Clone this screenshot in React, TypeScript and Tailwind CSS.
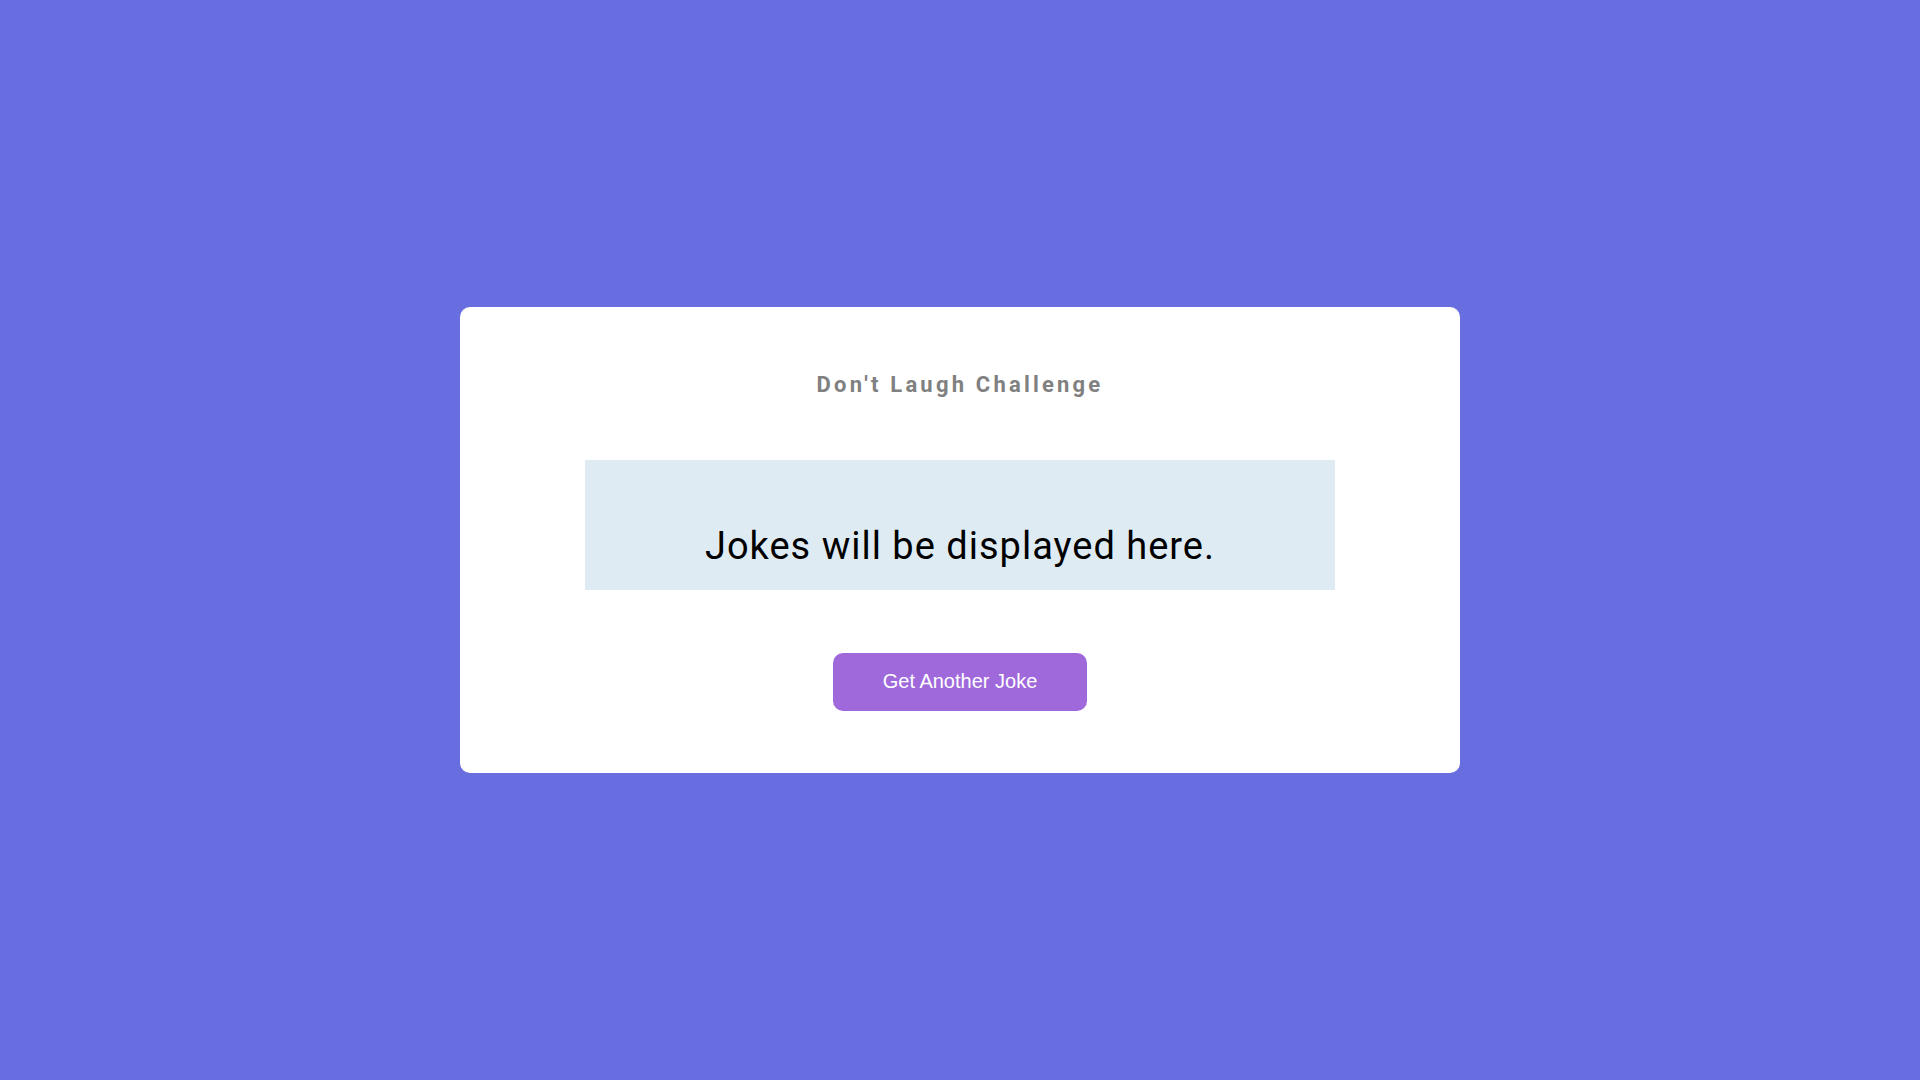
import React from "react";

export default function App() {
  return (
    <div className="flex h-screen w-full items-center justify-center bg-[#686de0]">
      <div className="flex w-[1000px] flex-col items-center rounded-[10px] bg-white pt-[66px] pb-[62px]">
        <h1
          className="text-[22px] font-bold leading-[24px] tracking-[3.2px] text-[#808080]"
          style={{ fontFamily: "Roboto, 'Liberation Sans', sans-serif" }}
        >
          Don't Laugh Challenge
        </h1>
        <div className="mt-[63px] flex h-[130px] w-[750px] justify-center bg-[#dfebf3] pt-[64px]">
          <p
            className="text-[38px] leading-[44px] tracking-[1px] text-black"
            style={{ fontFamily: "Roboto, 'Liberation Sans', sans-serif" }}
          >
            Jokes will be displayed here.
          </p>
        </div>
        <button
          className="mt-[63px] flex h-[58px] w-[254px] items-center justify-center rounded-[10px] bg-[#9f69dc] pb-[2px] text-[20px] text-white"
          style={{ fontFamily: "'Liberation Sans', Arial, sans-serif" }}
        >
          Get Another Joke
        </button>
      </div>
    </div>
  );
}
